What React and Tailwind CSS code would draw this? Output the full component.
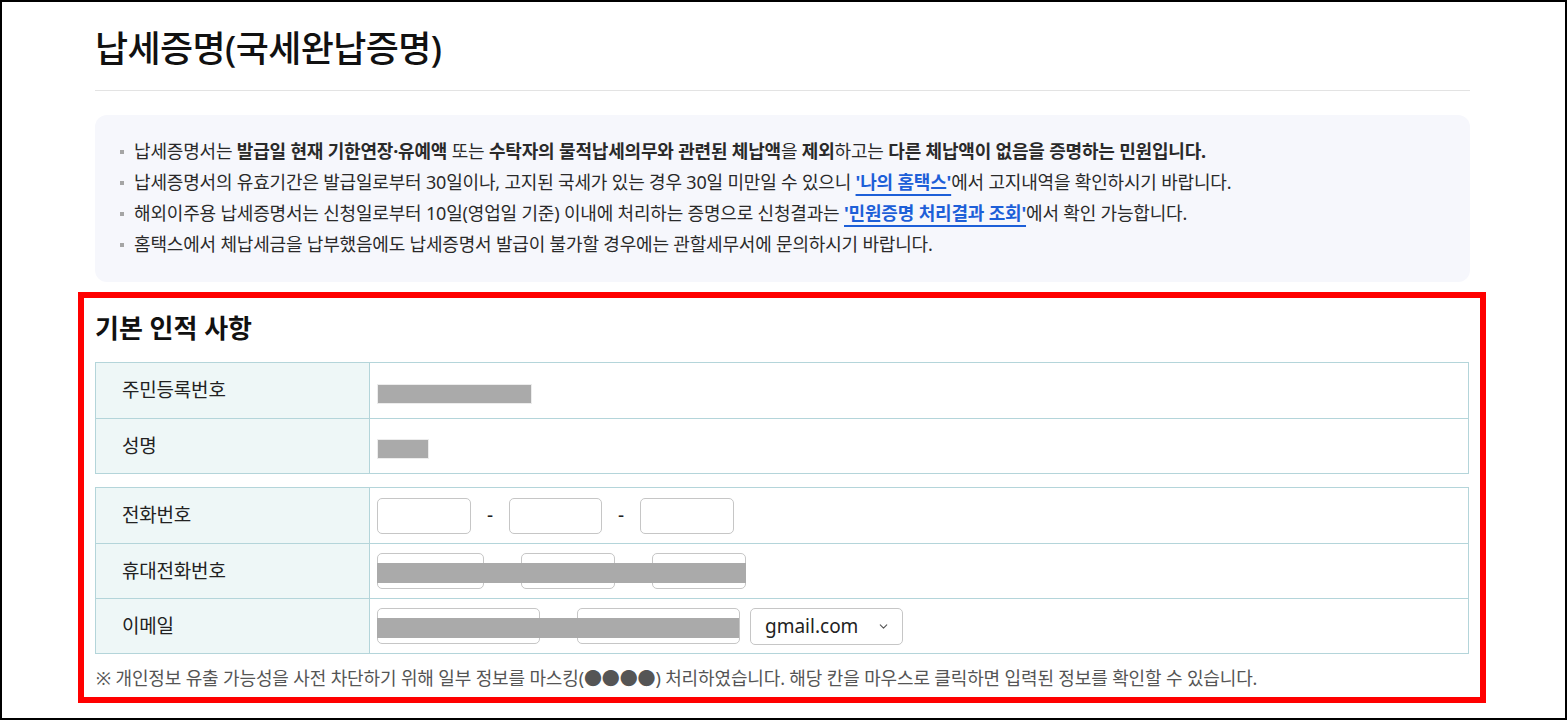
import { ChevronDown } from "lucide-react";

const font = "font-['Noto_Sans','Noto_Sans_CJK_KR',sans-serif]";

function Bullet({ children }) {
  return (
    <li className="flex items-center leading-[31px]">
      <span className="mr-[10px] h-[4px] w-[4px] shrink-0 bg-[#a5a5a5]"></span>
      <span>{children}</span>
    </li>
  );
}

function Link({ children }) {
  return (
    <span className="font-bold text-[#1d5fd8] underline decoration-[1.5px] underline-offset-[5px]">
      {children}
    </span>
  );
}

function Row({ label, children, first }) {
  return (
    <div className={`flex h-[55px] ${first ? "" : "border-t border-[#b4d5da]"}`}>
      <div className="flex w-[274px] shrink-0 items-center border-r border-[#b4d5da] bg-[#eef7f7] pl-[26px] text-[19px] tracking-[-0.2px] text-[#222]">
        {label}
      </div>
      <div className="relative flex flex-1 items-center pl-[7px]">{children}</div>
    </div>
  );
}

function Box({ w }) {
  return <div className={`h-[36px] rounded-[5px] border border-[#c6c6c6] bg-white ${w}`}></div>;
}

function Dash() {
  return <div className="w-[38px] text-center text-[19px] text-[#222]">-</div>;
}

export default function App() {
  return (
    <div className={`h-[720px] w-[1567px] overflow-hidden border-2 border-black bg-white ${font} text-[#222]`}>
      <div className="ml-[93px] w-[1375px] pt-[23px]">
        {/* Title */}
        <div className="border-b border-[#e3e3e3] pb-[17px]">
          <h1 className="text-[36px] font-medium leading-[48px] tracking-[-0.6px] text-[#111]">
            납세증명(국세완납증명)
          </h1>
        </div>

        {/* Notice box */}
        <ul className="mt-[24px] rounded-[12px] bg-[#f6f7fc] pb-[22px] pl-[25px] pt-[21px] text-[18px] tracking-[-0.18px] text-[#2a2a2a]">
          <Bullet>
            납세증명서는 <b>발급일 현재 기한연장·유예액</b> 또는 <b>수탁자의 물적납세의무와 관련된 체납액</b>을{" "}
            <b>제외</b>하고는 <b>다른 체납액이 없음을 증명하는 민원입니다.</b>
          </Bullet>
          <Bullet>
            납세증명서의 유효기간은 발급일로부터 30일이나, 고지된 국세가 있는 경우 30일 미만일 수 있으니{" "}
            <Link>'나의 홈택스'</Link>에서 고지내역을 확인하시기 바랍니다.
          </Bullet>
          <Bullet>
            해외이주용 납세증명서는 신청일로부터 10일(영업일 기준) 이내에 처리하는 증명으로 신청결과는{" "}
            <Link>'민원증명 처리결과 조회'</Link>에서 확인 가능합니다.
          </Bullet>
          <Bullet>홈택스에서 체납세금을 납부했음에도 납세증명서 발급이 불가할 경우에는 관할세무서에 문의하시기 바랍니다.</Bullet>
        </ul>

        {/* Highlighted section */}
        <section className="-ml-[17px] mt-[10px] w-[1408px] border-[6px] border-[#ff0000] px-[11px] pb-[7px] pt-[14px]">
          <h2 className="text-[26px] font-bold leading-[32px] text-[#111]">기본 인적 사항</h2>

          <div className="mt-[18px] border border-[#b4d5da]">
            <Row label="주민등록번호" first>
              <div className="mt-[6px] h-[20px] w-[155px] border border-[#ececec] bg-[#aaaaaa]"></div>
            </Row>
            <Row label="성명">
              <div className="mt-[5px] h-[20px] w-[52px] border border-[#ececec] bg-[#aaaaaa]"></div>
            </Row>
          </div>

          <div className="mt-[13px] border border-[#b4d5da]">
            <Row label="전화번호" first>
              <Box w="w-[94px]" />
              <Dash />
              <Box w="w-[93px]" />
              <Dash />
              <Box w="w-[94px]" />
            </Row>
            <Row label="휴대전화번호">
              <Box w="w-[107px]" />
              <div className="w-[37px]"></div>
              <Box w="w-[94px]" />
              <div className="w-[37px]"></div>
              <Box w="w-[94px]" />
              <div className="absolute left-[7px] top-[19px] h-[20px] w-[369px] bg-[#aaaaaa]"></div>
            </Row>
            <Row label="이메일">
              <Box w="w-[163px]" />
              <div className="w-[37px]"></div>
              <Box w="w-[163px]" />
              <div className="w-[10px]"></div>
              <div className="flex h-[37px] w-[153px] items-center justify-between rounded-[5px] border border-[#c6c6c6] bg-white pl-[14px] pr-[12px] text-[19px] text-[#222]">
                <span>gmail.com</span>
                <ChevronDown size={13} strokeWidth={2} className="text-[#555]" />
              </div>
              <div className="absolute left-[7px] top-[19px] h-[20px] w-[362px] bg-[#aaaaaa]"></div>
            </Row>
          </div>

          <p className="mt-[12px] pl-[1px] text-[18px] leading-[24px] tracking-[-0.14px] text-[#555]">
            ※ 개인정보 유출 가능성을 사전 차단하기 위해 일부 정보를 마스킹(●●●●) 처리하였습니다. 해당 칸을 마우스로 클릭하면 입력된 정보를 확인할 수 있습니다.
          </p>
        </section>
      </div>
    </div>
  );
}
